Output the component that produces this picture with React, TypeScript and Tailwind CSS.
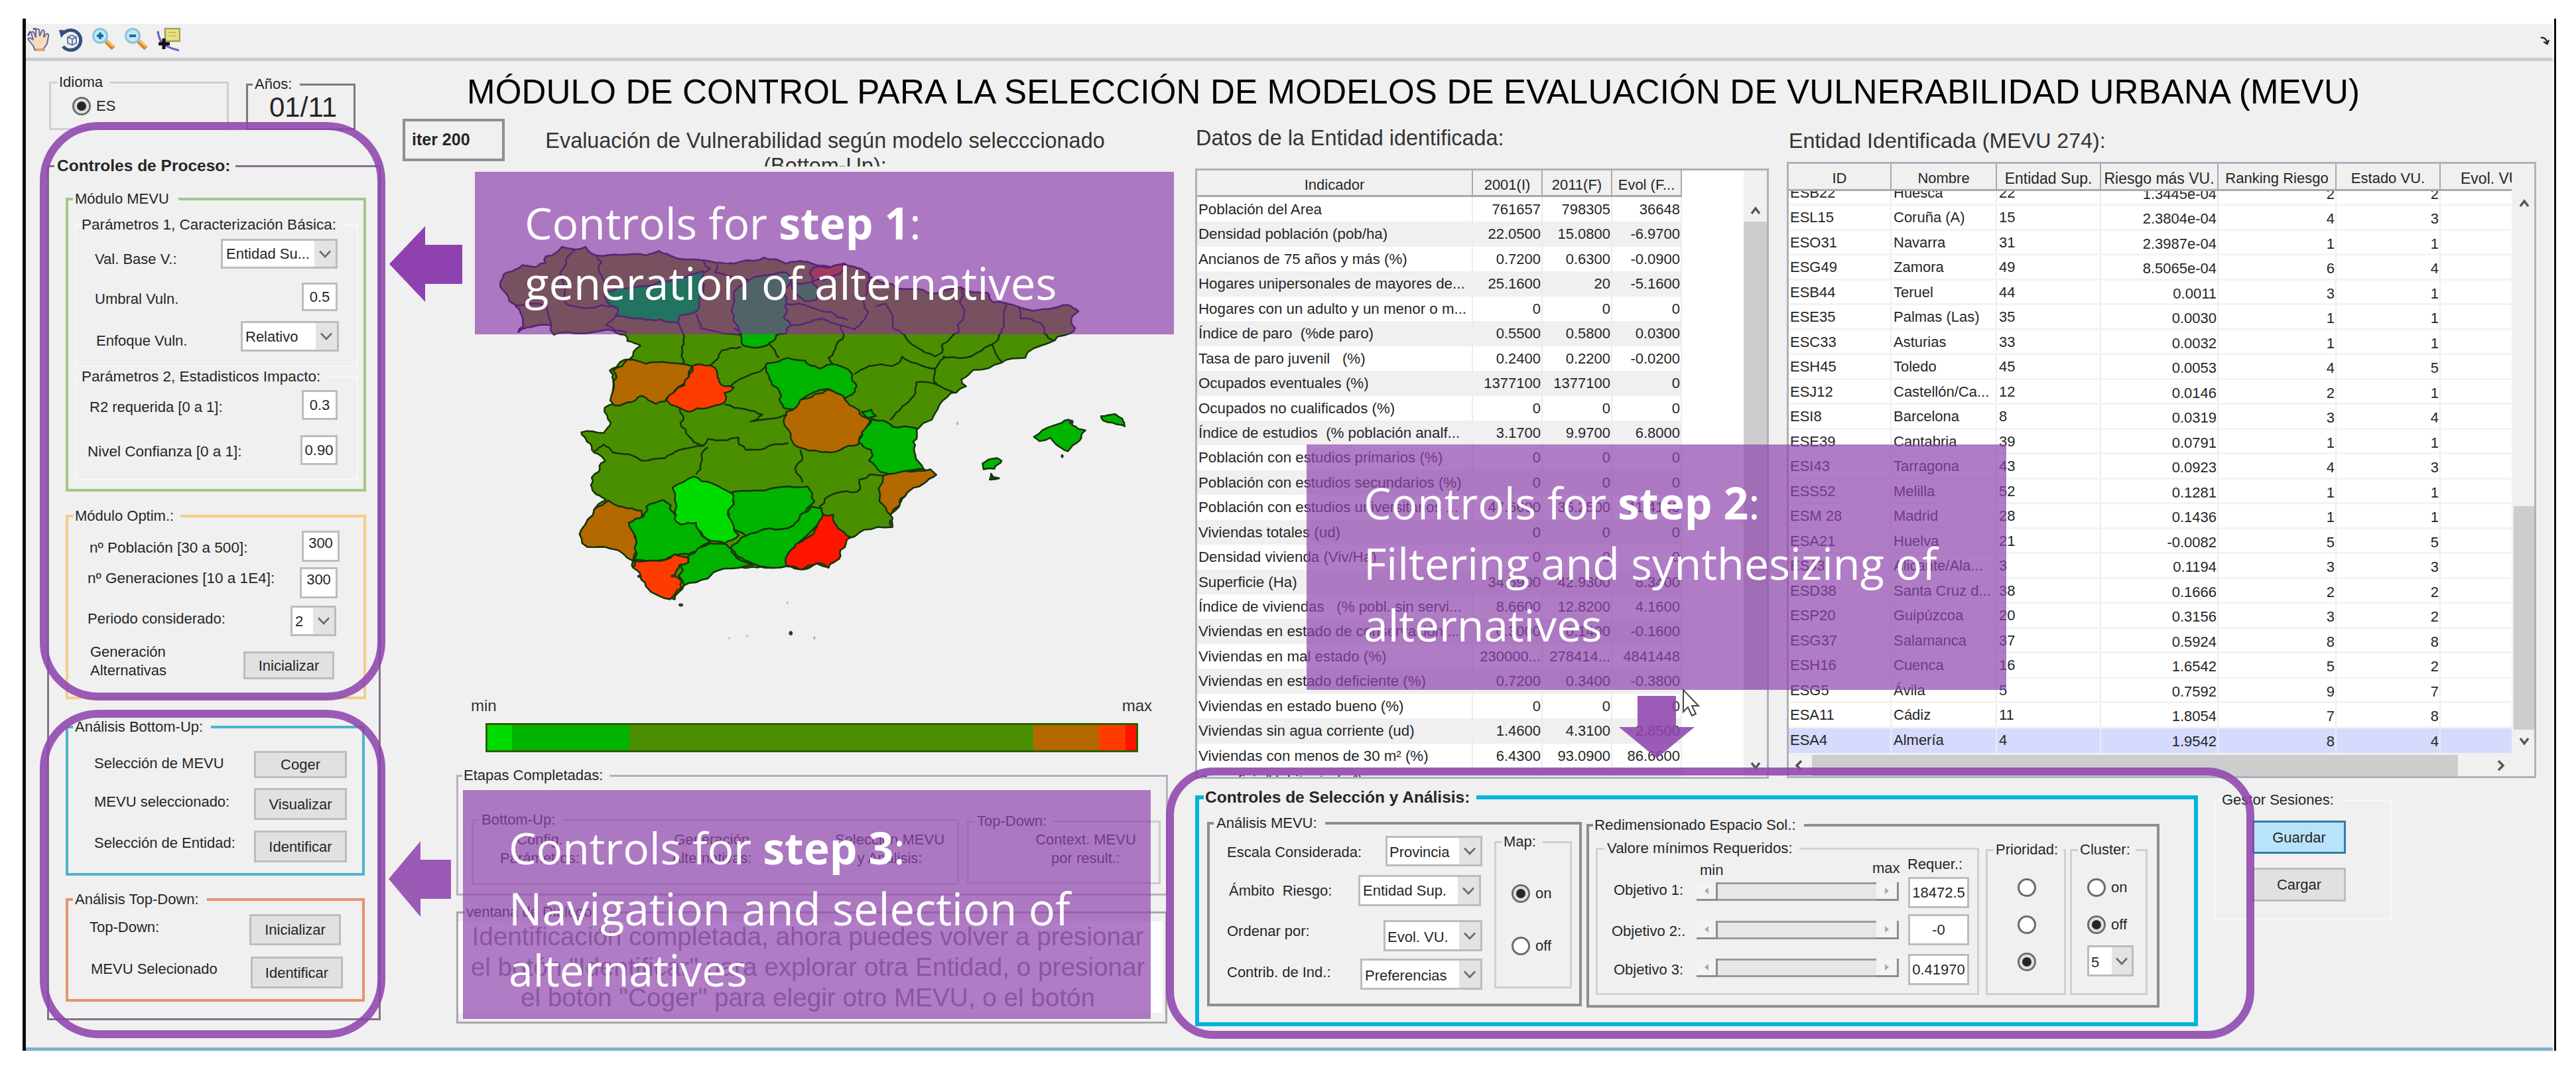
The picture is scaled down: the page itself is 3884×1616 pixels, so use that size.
import type { ReactNode } from "react";
import clsx from "clsx";

// ─── Data ─────────────────────────────────────────────────────────────────────

const indicators: [string, string, string, string][] = [
  ["Población del Area", "761657", "798305", "36648"],
  ["Densidad población (pob/ha)", "22.0500", "15.0800", "-6.9700"],
  ["Ancianos de 75 años y más (%)", "0.7200", "0.6300", "-0.0900"],
  ["Hogares unipersonales de mayores de...", "25.1600", "20", "-5.1600"],
  ["Hogares con un adulto y un menor o m...", "0", "0", "0"],
  ["Índice de paro  (%de paro)", "0.5500", "0.5800", "0.0300"],
  ["Tasa de paro juvenil   (%)", "0.2400", "0.2200", "-0.0200"],
  ["Ocupados eventuales (%)", "1377100", "1377100", "0"],
  ["Ocupados no cualificados (%)", "0", "0", "0"],
  ["Índice de estudios  (% población analf...", "3.1700", "9.9700", "6.8000"],
  ["Población con estudios primarios (%)", "0", "0", "0"],
  ["Población con estudios secundarios (%)", "0", "0", "0"],
  ["Población con estudios universitarios ...", "47.6600", "36.2500", "-11.4100"],
  ["Viviendas totales (ud)", "0", "0", "0"],
  ["Densidad vivienda (Viv/Ha)", "0", "0", "0"],
  ["Superficie (Ha)", "34.5900", "42.9300", "8.3400"],
  ["Índice de viviendas   (% pobl. sin servi...", "8.6600", "12.8200", "4.1600"],
  ["Viviendas en estado de conservación ...", "0.3000", "0.1400", "-0.1600"],
  ["Viviendas en mal estado (%)", "230000...", "278414...", "4841448"],
  ["Viviendas en estado deficiente (%)", "0.7200", "0.3400", "-0.3800"],
  ["Viviendas en estado bueno (%)", "0", "0", "0"],
  ["Viviendas sin agua corriente (ud)", "1.4600", "4.3100", "2.8500"],
  ["Viviendas con menos de 30 m² (%)", "6.4300", "93.0900", "86.6600"],
  ["Superficie/Habitante (m²)", "", "", ""],
];

const entities: [string, string, string, string, string, string][] = [
  ["ESB22", "Huesca", "22", "1.3445e-04", "2", "2"],
  ["ESL15", "Coruña (A)", "15", "2.3804e-04", "4", "3"],
  ["ESO31", "Navarra", "31", "2.3987e-04", "1", "1"],
  ["ESG49", "Zamora", "49", "8.5065e-04", "6", "4"],
  ["ESB44", "Teruel", "44", "0.0011", "3", "1"],
  ["ESE35", "Palmas (Las)", "35", "0.0030", "1", "1"],
  ["ESC33", "Asturias", "33", "0.0032", "1", "1"],
  ["ESH45", "Toledo", "45", "0.0053", "4", "5"],
  ["ESJ12", "Castellón/Ca...", "12", "0.0146", "2", "1"],
  ["ESI8", "Barcelona", "8", "0.0319", "3", "4"],
  ["ESE39", "Cantabria", "39", "0.0791", "1", "1"],
  ["ESI43", "Tarragona", "43", "0.0923", "4", "3"],
  ["ESS52", "Melilla", "52", "0.1281", "1", "1"],
  ["ESM 28", "Madrid", "28", "0.1436", "1", "1"],
  ["ESA21", "Huelva", "21", "-0.0082", "5", "5"],
  ["ESJ3", "Alicante/Ala...", "3", "0.1194", "3", "3"],
  ["ESD38", "Santa Cruz d...", "38", "0.1666", "2", "2"],
  ["ESP20", "Guipúzcoa", "20", "0.3156", "3", "2"],
  ["ESG37", "Salamanca", "37", "0.5924", "8", "8"],
  ["ESH16", "Cuenca", "16", "1.6542", "5", "2"],
  ["ESG5", "Ávila", "5", "0.7592", "9", "7"],
  ["ESA11", "Cádiz", "11", "1.8054", "7", "8"],
  ["ESA4", "Almería", "4", "1.9542", "8", "4"],
];

// ─── Map ──────────────────────────────────────────────────────────────────────

const coast =
  "132,160 145,125 178,98 205,105 228,90 228,65 262,30 290,40 312,30 335,62 385,60 440,62 467,45 490,62 560,80 610,92 640,85 688,70 735,92 765,82 795,95 830,105 858,92 895,112 910,140 935,160 975,185 1010,185 1060,200 1105,180 1160,200 1172,235 1215,245 1245,262 1290,260 1330,245 1352,268 1338,290 1345,330 1335,350 1290,385 1240,440 1190,458 1130,485 1105,520 1115,545 1095,568 1083,570 1055,630 1015,700 1003,750 1008,800 1025,850 1052,872 1025,905 990,940 975,980 955,1020 960,1065 900,1075 870,1105 850,1150 840,1190 825,1215 800,1200 770,1222 735,1210 700,1215 665,1212 605,1218 570,1255 520,1280 500,1332 460,1305 430,1260 410,1210 412,1180 365,1145 315,1138 303,1075 330,1000 355,965 335,945 323,910 340,860 353,822 330,790 315,750 303,715 350,718 365,680 352,625 370,610 370,520 363,487 385,455 405,445 428,395 400,378 395,355 360,335 290,350 245,355 240,320 210,320 170,345 180,300 165,250 150,220";

const borders = [
  "290,40 265,110 262,150 270,240 290,250 330,255 345,245 375,250",
  "335,62 345,90 340,120 355,170 355,200",
  "165,245 200,240 230,250 240,320",
  "375,285 355,320 400,345",
  "560,80 575,110 562,125",
  "590,95 585,125 620,140 655,150",
  "510,310 518,350 515,400 518,468",
  "545,280 555,330 600,350 640,355 625,330",
  "575,468 600,412 640,400",
  "695,460 650,510 610,560",
  "700,390 720,440",
  "745,320 780,310 810,295 850,320 855,370 835,420 825,440 835,465",
  "730,240 790,255 830,270 865,300",
  "910,140 905,200 900,240 900,300 880,335 850,320",
  "925,250 945,240 960,330 985,355 1010,400 1050,435 1065,420 1065,390 1100,345 1110,290 1105,180",
  "1200,240 1195,300 1190,345 1170,390 1190,455",
  "1065,435 1110,440 1140,420 1170,390",
  "1225,250 1230,295 1270,310 1280,350 1300,375",
  "880,500 910,470 960,470 980,435 1010,460 1050,480 1070,440",
  "1050,480 1055,540 1090,570",
  "1055,540 1010,530 1005,580 980,620 955,670",
  "510,630 512,680 530,730 560,765 510,780 480,810 430,820 370,790 350,760 330,785",
  "605,612 650,630 685,650 660,675 735,650",
  "560,765 570,740 610,745 635,735 650,780 690,775 740,755",
  "570,770 555,830 545,870",
  "765,780 760,830 770,900",
  "805,990 840,940 885,935 890,890 915,870 940,875",
];

type Province = { name: string; fill: string; tint: string; points: string };

const provinces: Province[] = [
  { name: "leon", fill: "#00b400", tint: "#22735f", points: "350,200 380,180 440,175 500,150 560,120 562,170 553,215 550,260 510,285 505,312 470,298 430,295 375,285 380,260 355,230" },
  { name: "burgos", fill: "#00b400", tint: "#506468", points: "625,215 655,155 690,135 735,125 745,160 730,200 735,240 730,290 745,320 735,350 715,355 700,385 668,403 645,395 640,350 632,320 620,270" },
  { name: "guipuzcoa", fill: "#ff3c00", tint: "#a03a60", points: "795,105 830,105 858,92 848,130 820,150 790,158" },
  { name: "alava", fill: "#00b400", tint: "#506468", points: "745,165 790,160 808,190 800,225 775,230 755,200" },
  { name: "salamanca", fill: "#b36800", tint: "#b36800", points: "370,487 400,447 440,462 475,455 535,470 530,510 500,560 480,600 460,610 430,580 400,605 372,615 372,540" },
  { name: "avila", fill: "#ff3c00", tint: "#ff3c00", points: "537,470 575,468 590,510 605,545 625,550 605,570 605,605 570,625 530,640 510,625 482,595 500,565 530,510" },
  { name: "guadalajara", fill: "#00b400", tint: "#00b400", points: "695,460 740,440 775,450 805,480 840,465 870,490 882,535 875,575 860,590 825,555 770,590 750,630 730,625 725,580 705,540 697,500" },
  { name: "cuenca", fill: "#b36800", tint: "#b36800", points: "735,640 765,595 795,575 825,557 850,575 865,605 890,635 912,670 905,710 888,760 850,780 810,788 760,770 745,720 732,660" },
  { name: "rincon", fill: "#00b400", tint: "#00b400", points: "895,640 915,632 925,655 905,662" },
  { name: "valencia", fill: "#00b400", tint: "#00b400", points: "915,665 940,672 960,695 1010,700 1003,750 1008,800 1025,850 985,858 965,875 935,862 910,820 915,780 888,750 895,715" },
  { name: "alicante", fill: "#b36800", tint: "#b36800", points: "940,875 985,858 1040,852 1052,872 1025,905 990,940 975,985 955,1020 932,970" },
  { name: "huelva", fill: "#b36800", tint: "#b36800", points: "360,967 390,990 430,1005 430,1030 403,1050 415,1100 412,1190 365,1145 315,1138 303,1075 330,1000" },
  { name: "sevilla", fill: "#00b400", tint: "#00b400", points: "403,1050 435,1025 440,990 475,965 492,985 500,1020 520,1050 545,1050 555,1090 575,1120 545,1155 530,1165 500,1170 480,1185 440,1190 415,1185 417,1100" },
  { name: "jaen", fill: "#00b400", tint: "#00b400", points: "622,935 690,930 740,915 780,915 795,970 765,1020 750,1060 700,1070 650,1098 620,1060 615,1020 625,980" },
  { name: "granada", fill: "#00b400", tint: "#00b400", points: "640,1105 650,1098 700,1070 750,1060 765,1020 790,990 810,995 805,1050 770,1110 740,1160 735,1210 700,1215 665,1200 635,1175 618,1140" },
  { name: "malaga", fill: "#00b400", tint: "#00b400", points: "530,1170 575,1125 610,1130 625,1165 665,1205 605,1218 570,1255 520,1280 508,1245 515,1200" },
  { name: "cordoba", fill: "#00dc00", tint: "#00dc00", points: "495,920 540,878 580,905 620,940 625,980 615,1030 635,1095 605,1125 575,1115 550,1075 545,1050 512,1055 500,1010" },
  { name: "cadiz", fill: "#ff3c00", tint: "#ff3c00", points: "415,1190 445,1190 490,1180 500,1165 530,1180 530,1195 510,1205 500,1245 515,1265 515,1290 490,1332 450,1305 430,1260 412,1215" },
  { name: "almeria", fill: "#ff1400", tint: "#ff1400", points: "812,1020 835,1020 845,1070 870,1102 850,1150 840,1190 825,1215 800,1198 770,1222 735,1208 745,1150 775,1110 800,1065" },
  { name: "mallorca", fill: "#00b400", tint: "#00b400", points: "1258,732 1300,690 1332,668 1340,690 1367,708 1355,745 1330,785 1305,760 1293,735 1270,748" },
  { name: "menorca", fill: "#00b400", tint: "#00b400", points: "1400,655 1430,648 1445,665 1450,693 1425,680 1405,672" },
  { name: "ibiza", fill: "#00b400", tint: "#00b400", points: "1150,830 1180,810 1190,820 1175,850 1152,852" },
  { name: "formentera", fill: "#1c4a1c", tint: "#1c4a1c", points: "1168,868 1172,880 1185,885 1165,890" },
];

type Point = [number, number];

// Adds small bumps between two points. The bump depends only on the two ends,
// so neighbouring provinces share the same border.
const roughen = (a: Point, b: Point, depth: number): Point[] => {
  const dx = b[0] - a[0];
  const dy = b[1] - a[1];
  const len = Math.hypot(dx, dy);
  if (depth === 0 || len < 14) return [b];
  const seed = Math.sin((a[0] + b[0]) * 12.9898 + (a[1] + b[1]) * 78.233) * 43758.5453;
  const r = (seed - Math.floor(seed) - 0.5) * 0.3;
  const sign = a[0] < b[0] || (a[0] === b[0] && a[1] < b[1]) ? 1 : -1;
  const mid: Point = [(a[0] + b[0]) / 2 - dy * r * sign, (a[1] + b[1]) / 2 + dx * r * sign];
  return [...roughen(a, mid, depth - 1), ...roughen(mid, b, depth - 1)];
};

const toPath = (points: string, closed = true) => {
  const list = points.split(" ").map((p) => p.split(",").map(Number) as Point);
  const ends = closed ? [...list.slice(1), list[0]] : list.slice(1);
  let from = list[0];
  const out: Point[] = [from];
  for (const to of ends) {
    out.push(...roughen(from, to, 2));
    from = to;
  }
  return "M" + out.map(([x, y]) => `${x.toFixed(1)},${y.toFixed(1)}`).join("L") + (closed ? "Z" : "");
};

const SpainMap = ({ tinted = false, className }: { tinted?: boolean; className?: string }) => {
  const stroke = tinted ? "#5b2378" : "#16330a";
  return (
    <svg viewBox="130 20 1330 1480" preserveAspectRatio="none" className={className}>
      <g stroke={stroke} strokeWidth={2.5} strokeLinejoin="round">
        <path d={toPath(coast)} fill={tinted ? "#77515f" : "#4a8f00"} vectorEffect="non-scaling-stroke" />
        {borders.map((b) => (
          <path key={b} d={toPath(b, false)} fill="none" vectorEffect="non-scaling-stroke" />
        ))}
        {provinces.map((p) => (
          <path key={p.name} d={toPath(p.points)} fill={tinted ? p.tint : p.fill} vectorEffect="non-scaling-stroke" />
        ))}
      </g>
      <g fill="#333">
        <ellipse cx={513} cy={1353} rx={5} ry={6} />
        <ellipse cx={745} cy={1457} rx={4} ry={8} />
        <ellipse cx={1318} cy={803} rx={3} ry={7} />
        <ellipse cx={1337} cy={677} rx={5} ry={9} />
        <ellipse cx={955} cy={1050} rx={3} ry={14} />
        <ellipse cx={426} cy={1247} rx={5} ry={6} />
        <ellipse cx={496} cy={1246} rx={5} ry={6} />
      </g>
      <g fill="#aaa">
        <ellipse cx={1097} cy={682} rx={2} ry={7} />
        <ellipse cx={795} cy={1475} rx={2} ry={6} />
        <ellipse cx={653} cy={1468} rx={1.5} ry={5} />
        <ellipse cx={615} cy={1476} rx={1.5} ry={4} />
        <ellipse cx={738} cy={1345} rx={1.5} ry={5} />
      </g>
    </svg>
  );
};

// ─── Small widgets ────────────────────────────────────────────────────────────

const Group = ({
  title,
  className,
  legendClass,
  children,
}: {
  title: string;
  className: string;
  legendClass?: string;
  children?: ReactNode;
}) => (
  <fieldset className={className}>
    <legend className={clsx("leading-7 whitespace-pre", legendClass)}>{title}</legend>
    {children}
  </fieldset>
);

const Row = ({ className, children }: { className: string; children: ReactNode }) => (
  <div className={clsx("flex items-start justify-between", className)}>{children}</div>
);

const Label = ({ className, children }: { className?: string; children: ReactNode }) => (
  <span className={clsx("leading-7 whitespace-pre", className)}>{children}</span>
);

const Input = ({ className, children }: { className: string; children: ReactNode }) => (
  <div className={clsx("flex items-center justify-center border-[3px] border-[#b9bdc3] bg-white whitespace-nowrap", className)}>
    {children}
  </div>
);

const Select = ({
  value,
  className,
  valueClass,
  narrow = false,
}: {
  value: string;
  className: string;
  valueClass?: string;
  narrow?: boolean;
}) => (
  <div className={clsx("flex border-[3px] border-[#bcbcbc] bg-white", className)}>
    <div className={clsx("flex flex-1 items-center whitespace-nowrap", valueClass ?? "pl-[5px]")}>{value}</div>
    <div className={clsx("flex shrink-0 items-center justify-center bg-[#e3e3e3]", narrow ? "w-[30px]" : "w-[32px]")}>
      <svg viewBox="0 0 18 12" className="h-3 w-[18px]" fill="none" stroke="#6a6a6a" strokeWidth={2.6}>
        <path d="M1 1.5L9 10L17 1.5" />
      </svg>
    </div>
  </div>
);

const Button = ({ className, children }: { className: string; children: ReactNode }) => (
  <button className={clsx("flex items-center justify-center border-[3px]", className)}>{children}</button>
);

const grey = "border-[#bdbdbd] bg-[#e1e1e1]";

const Radio = ({ checked = false, className }: { checked?: boolean; className?: string }) => (
  <span
    className={clsx(
      "flex size-7 shrink-0 items-center justify-center rounded-full border-[3px] border-[#6b6b6b] bg-white",
      className,
    )}
  >
    {checked && <span className="size-[14px] rounded-full bg-[#262626] ring-4 ring-[#dedede]" />}
  </span>
);

const Chevron = ({ d, className }: { d: string; className?: string }) => (
  <svg viewBox="0 0 18 18" className={clsx("size-[18px]", className)} fill="none" stroke="#555" strokeWidth={3.4}>
    <path d={d} />
  </svg>
);

const up = "M3 13L9 5L15 13";
const down = "M3 5L9 13L15 5";
const left = "M12 2L5 9L12 16";
const right = "M6 2L13 9L6 16";

const Slider = ({ className }: { className?: string }) => (
  <div className={clsx("flex h-7 w-[305px] shrink-0", className)}>
    <div className="flex w-8 items-center justify-center border-r-[3px] border-b-[3px] border-[#8d8d8d] bg-[#f3f3f3]">
      <svg viewBox="0 0 6 10" className="h-[10px] w-[6px]" fill="#a9a9a9">
        <path d="M6 0V10L0 5Z" />
      </svg>
    </div>
    <div className="flex-1 border-y-[3px] border-[#9a9a9a] bg-[#e7e7e7]" />
    <div className="flex w-[34px] items-center justify-center border-r-[3px] border-b-[3px] border-[#8d8d8d] bg-[#f3f3f3]">
      <svg viewBox="0 0 6 10" className="h-[10px] w-[6px]" fill="#a9a9a9">
        <path d="M0 0V10L6 5Z" />
      </svg>
    </div>
  </div>
);

// ─── Toolbar ──────────────────────────────────────────────────────────────────

const Toolbar = () => (
  <div className="flex h-14 items-start justify-between border-b-[5px] border-[#cdcdcd] pt-[6px] pr-1 pl-[2px]">
    <div className="flex gap-[13px]">
      {/* Pan hand */}
      <svg viewBox="0 0 35 36" className="h-9 w-[35px]">
        <path
          d="M12 34L9 27L1 17Q2 14 6 16L9 18L6 8Q8 4 10 7L13 14L13 3Q16 0 18 3L19 12L22 4Q25 2 26 6L25 14L29 9Q33 8 32 13L30 24L25 31V34Z"
          fill="#fbd9bd"
          stroke="#5d6f9c"
          strokeWidth={2}
          strokeLinejoin="round"
        />
        <path d="M1 12L5 5M9 2L13 1" stroke="#3a4f8c" strokeWidth={2.5} />
        <path d="M12 33H25" stroke="#e2a36f" strokeWidth={4} />
      </svg>
      {/* Rotate */}
      <svg viewBox="0 0 36 36" className="h-9 w-9" fill="none">
        <path d="M7 8A15 15 0 1 1 6 28" stroke="#34507f" strokeWidth={5} />
        <path d="M0 3L13 4L3 15Z" fill="#34507f" />
        <path d="M13 14L19 11L26 14V23L20 26L13 23ZM13 14L20 17L26 14M20 17V26" stroke="#5f7eae" strokeWidth={2} />
      </svg>
      {/* Zoom in / out */}
      {["in", "out"].map((kind) => (
        <svg key={kind} viewBox="0 0 36 36" className="h-9 w-9" fill="none">
          <path d="M22 20L33 31" stroke="#d98a2b" strokeWidth={7} />
          <path d="M23 19L33 28" stroke="#f6c37e" strokeWidth={2.5} />
          <circle cx={13} cy={12} r={10.5} fill="#bfe8fa" stroke="#8fc3dd" strokeWidth={3} />
          <path d="M8 12H18" stroke="#1d6f9a" strokeWidth={4} />
          {kind === "in" && <path d="M13 7V17" stroke="#1d6f9a" strokeWidth={4} />}
        </svg>
      ))}
      {/* Data cursor */}
      <svg viewBox="0 0 36 36" className="h-9 w-9" fill="none">
        <path d="M2 5Q4 22 14 27T34 34" stroke="#6a5fc4" strokeWidth={3} />
        <rect x={13} y={1} width={22} height={19} fill="#e9e08a" stroke="#a8a05a" strokeWidth={2.5} />
        <path d="M18 7H30M18 12H30" stroke="#c9bf66" strokeWidth={2} />
        <path d="M11 16V32M3 24H20" stroke="#111" strokeWidth={5} />
      </svg>
    </div>
    <svg viewBox="0 0 18 18" className="mt-3 h-4 w-4" fill="none" stroke="#222" strokeWidth={2.5}>
      <path d="M2 3Q11 2 13 12M7 10L13 14L16 7" />
    </svg>
  </div>
);

// ─── Left column ──────────────────────────────────────────────────────────────

const ProcessControls = () => (
  <Group
    title="Controles de Proceso:"
    className="mt-[40px] ml-8 h-[1302px] w-[503px] border-[3px] border-[#86708c]"
    legendClass="ml-2 pr-2 pl-1 text-[24.5px] font-bold"
  >
    <Group
      title="Módulo MEVU"
      className="mt-[22px] ml-[25px] h-[455px] w-[453px] border-4 border-[#a3c78a]"
      legendClass="ml-[7px] pr-[14px] pl-[3px]"
    >
      <Group
        title="Parámetros 1, Caracterización Básica:"
        className="mt-[11px] ml-[10px] h-[228px] w-[427px] border-2 border-[#f8f8f8]"
        legendClass="ml-2 pr-2 text-[22.5px]"
      >
        <Row className="h-[52px] pr-[29px] pl-7">
          <Label className="mt-[24px]">Val. Base V.:</Label>
          <Select value="Entidad Su..." className="mt-[7px] h-[45px] w-[176px]" />
        </Row>
        <Row className="mt-[21px] h-[43px] pr-[29px] pl-7">
          <Label className="mt-[11px]">Umbral Vuln.</Label>
          <Input className="h-[43px] w-[54px]">0.5</Input>
        </Row>
        <Row className="mt-[15px] h-[46px] pr-[27px] pl-[30px]">
          <Label className="mt-[16px]">Enfoque Vuln.</Label>
          <Select value="Relativo" className="h-[46px] w-[148px]" valueClass="pl-1" />
        </Row>
      </Group>
      <Group
        title="Parámetros 2, Estadisticos Impacto:"
        className="mt-px ml-[10px] h-[170px] w-[427px] border-2 border-[#f8f8f8]"
        legendClass="ml-2 pr-2 text-[22.5px]"
      >
        <Row className="mt-[6px] h-[45px] pr-[29px] pl-5">
          <Label className="mt-[12px]">R2 requerida [0 a 1]:</Label>
          <Input className="h-[45px] w-[54px]">0.3</Input>
        </Row>
        <Row className="mt-[23px] h-[45px] pr-[29px] pl-[17px]">
          <Label className="mt-[11px] text-[22.5px]">Nivel Confianza [0 a 1]:</Label>
          <Input className="h-[45px] w-[56px]">0.90</Input>
        </Row>
      </Group>
    </Group>

    <Group
      title="Módulo Optim.:"
      className="mt-[23px] ml-[25px] h-[290px] w-[453px] border-4 border-[#f5cd85]"
      legendClass="ml-[7px] pr-[10px] pl-[3px]"
    >
      <Row className="mt-2 h-[47px] pr-9 pl-8">
        <Label className="mt-3 text-[22.5px]">nº Población [30 a 500]:</Label>
        <Input className="h-[47px] w-[57px] border-[#9a9ea4] pb-[10px]">300</Input>
      </Row>
      <Row className="mt-2 h-[47px] pr-[39px] pl-[29px]">
        <Label className="mt-[3px] text-[22.5px]">nº Generaciones [10 a 1E4]:</Label>
        <Input className="h-[47px] w-[57px] border-[#9a9ea4] pb-[10px]">300</Input>
      </Row>
      <Row className="mt-[11px] h-[46px] pr-[41px] pl-[29px]">
        <Label className="mt-[6px]">Periodo considerado:</Label>
        <Select value="2" className="h-[46px] w-[69px]" valueClass="pl-1" />
      </Row>
      <Row className="mt-[10px] h-[58px] pr-[44px] pl-[33px]">
        <div className="flex flex-col">
          <Label>Generación</Label>
          <Label>Alternativas</Label>
        </div>
        <Button className={clsx("mt-[13px] h-[42px] w-[137px]", grey)}>Inicializar</Button>
      </Row>
    </Group>

    <Group
      title="Análisis Bottom-Up:"
      className="mt-[28px] ml-[25px] h-[238px] w-[451px] border-4 border-[#4fb3cf]"
      legendClass="ml-[7px] pr-[12px] pl-[3px]"
    >
      <Row className="mt-[22px] h-[41px] pr-[23px] pl-[39px]">
        <Label className="mt-[5px]">Selección de MEVU</Label>
        <Button className={clsx("h-[41px] w-[140px]", grey)}>Coger</Button>
      </Row>
      <Row className="mt-[15px] h-12 pr-[23px] pl-[39px]">
        <Label className="mt-[7px]">MEVU seleccionado:</Label>
        <Button className={clsx("h-12 w-[140px]", grey)}>Visualizar</Button>
      </Row>
      <Row className="mt-4 h-12 pr-[23px] pl-[39px]">
        <Label className="mt-[5px]">Selección de Entidad:</Label>
        <Button className={clsx("h-12 w-[140px]", grey)}>Identificar</Button>
      </Row>
    </Group>

    <Group
      title="Análisis Top-Down:"
      className="mt-[22px] ml-[25px] h-[168px] w-[451px] border-4 border-[#e5946f]"
      legendClass="ml-[7px] pr-[12px] pl-[3px]"
    >
      <Row className="mt-2 h-[47px] pr-8 pl-8">
        <Label className="mt-[6px]">Top-Down:</Label>
        <Button className={clsx("h-[47px] w-[138px]", grey)}>Inicializar</Button>
      </Row>
      <Row className="mt-[17px] h-12 pr-[29px] pl-[34px]">
        <Label className="mt-[5px]">MEVU Selecionado</Label>
        <Button className={clsx("h-12 w-[139px]", grey)}>Identificar</Button>
      </Row>
    </Group>
  </Group>
);

const LeftColumn = () => (
  <div className="w-[561px] shrink-0">
    <div className="flex h-[104px] items-start pl-[35px]">
      <Group title="Idioma" className="mt-[18px] h-[86px] w-[271px] border-[3px] border-[#cfcfcf]" legendClass="ml-[9px] pr-[10px] pl-[3px]">
        <div className="flex h-[44px] items-center gap-2 pl-8">
          <Radio checked />
          <Label>ES</Label>
        </div>
      </Group>
      <Group title="Años:" className="mt-[21px] ml-[26px] h-[83px] w-[165px] border-[3px] border-[#7b7b7b]" legendClass="ml-[7px] pr-[12px] pl-[3px]">
        <p className="pl-[32px] text-[42px] leading-[42px]">01/11</p>
      </Group>
    </div>
    <ProcessControls />
  </div>
);

// ─── Map column ───────────────────────────────────────────────────────────────

const MapColumn = () => (
  <div className="w-[1180px] shrink-0">
    <div className="flex h-[81px] items-start">
      <div className="mt-[9px] ml-[7px] flex h-16 w-[154px] items-center border-4 border-[#8f8f8f] pl-[10px] text-[25px] font-bold">
        iter 200
      </div>
      <p className="mt-[23px] ml-[33px] h-[58px] w-[900px] overflow-hidden text-center text-[32.4px] leading-[38px] text-[#333]">
        Evaluación de Vulnerabilidad según modelo selecccionado
        <br />
        (Bottom-Up):
      </p>
    </div>
    <SpainMap className="mt-[117px] ml-[153px] h-[604px] w-[950px]" />
    <div className="mt-[78px] flex h-7 justify-between pr-[43px] pl-[110px] text-[24px] leading-7 text-[#333]">
      <span>min</span>
      <span>max</span>
    </div>
    <div className="mt-3 ml-[132px] flex h-11 w-[984px] border-[3px] border-black/35 bg-[#4a8f00] bg-clip-border">
      <div className="w-[37px] bg-[#00dc00]" />
      <div className="w-[177px] bg-[#00b400]" />
      <div className="flex-1 bg-[#4a8f00]" />
      <div className="w-[99px] bg-[#b36800]" />
      <div className="w-[40px] bg-[#ff3c00]" />
      <div className="w-[16px] bg-[#ff1400]" />
    </div>

    <Group title="Etapas Completadas:" className="mt-[21px] ml-[88px] h-[195px] w-[1073px] border-[3px] border-[#bcaec1]" legendClass="ml-[6px] pr-[10px] pl-[2px]">
      <div className="mt-[39px] flex items-start">
        <Group title="Bottom-Up:" className="ml-5 h-[112px] w-[733px] border-[3px] border-[#cccccc]" legendClass="ml-[9px] pr-[10px] pl-[3px]">
          <div className="flex pt-[2px] text-center leading-7">
            <p className="w-[200px]">Config.<br />Parámetros:</p>
            <p className="w-[318px]">Generación<br />Alternativas:</p>
            <p className="w-[211px] pl-2">Selección MEVU<br />y Análisis:</p>
          </div>
        </Group>
        <Group title="Top-Down:" className="mt-[2px] ml-3 h-[109px] w-[292px] border-[3px] border-[#cccccc]" legendClass="ml-[9px] pr-[10px] pl-[3px]">
          <p className="pl-[66px] text-center leading-7">Context. MEVU<br />por result.:</p>
        </Group>
      </div>
    </Group>

    <Group title="ventana de Diálogo:" className="mt-[11px] ml-[88px] h-[182px] w-[1072px] border-[3px] border-[#a8a8a8]" legendClass="ml-[10px] pr-[10px] pl-[2px]">
      <p className="h-[138px] w-[1062px] bg-white pr-2 text-center text-[38.7px] leading-[46px] whitespace-nowrap text-[#808080]">
        Identificación completada, ahora puedes volver a presionar
        <br />
        el botón "Identificar" para explorar otra Entidad, o presionar
        <br />
        el botón "Coger" para elegir otro MEVU, o el botón
      </p>
    </Group>
  </div>
);

// ─── Tables ───────────────────────────────────────────────────────────────────

const IndicatorTable = () => (
  <div className="mt-[26px] ml-[22px] flex h-[920px] w-[865px] overflow-hidden border-[3px] border-[#abb1bd] bg-white">
    <div className="w-[731px] shrink-0">
      <div className="flex h-10 items-center border-b-[3px] border-[#a9a9a9] bg-[#f0f0f0] text-center">
        <span className="h-full w-[416px] border-r-2 border-[#a9a9a9] pt-1 leading-9">Indicador</span>
        <span className="h-full w-[105px] border-r-2 border-[#a9a9a9] pt-1 leading-9">2001(I)</span>
        <span className="h-full w-[105px] border-r-2 border-[#a9a9a9] pt-1 leading-9">2011(F)</span>
        <span className="h-full w-[105px] border-r-2 border-[#a9a9a9] pt-1 leading-9">Evol (F...</span>
      </div>
      {indicators.map(([name, before, after, diff], i) => (
        <div key={name} className={clsx("flex h-[37.45px] leading-[37px]", i % 2 === 1 && "bg-[#f0f0f0]")}>
          <span className="w-[416px] overflow-hidden border-r-2 border-[#ececec] pl-[2px] text-[22.3px] whitespace-pre">{name}</span>
          <span className="w-[105px] border-r-2 border-[#ececec] pr-px text-right">{before}</span>
          <span className="w-[105px] border-r-2 border-[#ececec] pr-px text-right">{after}</span>
          <span className="w-[105px] border-r-2 border-[#ececec] pr-px text-right">{diff}</span>
        </div>
      ))}
    </div>
    <div className="ml-auto flex w-[35px] flex-col items-center bg-[#f0f0f0] pt-[52px]">
      <Chevron d={up} />
      <div className="mt-[7px] h-[705px] w-full bg-[#cdcdcd]" />
      <Chevron d={down} className="mt-[106px]" />
    </div>
  </div>
);

const EntityTable = () => (
  <div className="mt-3 ml-1 h-[929px] w-[1130px] border-[3px] border-[#abb1bd] bg-[#f0f0f0]">
    <div className="flex">
      <div className="h-[888px] w-[1090px] overflow-hidden bg-white">
        <div className="flex h-[41px] border-b-[3px] border-[#a9a9a9] bg-[#f0f0f0] text-center leading-9 whitespace-nowrap">
          <span className="w-[155px] border-r-2 border-[#a9a9a9] pt-1">ID</span>
          <span className="w-[159px] border-r-2 border-[#a9a9a9] pt-1">Nombre</span>
          <span className="w-[157px] border-r-2 border-[#a9a9a9] pt-1 text-[23px]">Entidad Sup.</span>
          <span className="w-[177px] border-r-2 border-[#a9a9a9] pt-1 text-[23px]">Riesgo más VU.</span>
          <span className="w-[178px] border-r-2 border-[#a9a9a9] pt-1">Ranking Riesgo</span>
          <span className="w-[157px] border-r-2 border-[#a9a9a9] pt-1">Estado VU.</span>
          <span className="w-[107px] overflow-hidden pt-1 pl-[30px] text-left text-[23px]">Evol. VU.</span>
        </div>
        <div className="flex h-[847px] flex-col justify-end overflow-hidden">
          {entities.map(([id, name, sup, risk, rank, state], i) => (
            <div
              key={id}
              className={clsx(
                "flex h-[37.5px] shrink-0 leading-[35px]",
                i === entities.length - 1 ? "bg-[#d6dafd]" : "border-b-[3px] border-[#f3f3f3]",
              )}
            >
              <span className="w-[155px] border-r-2 border-[#ededed] pl-[2px]">{id}</span>
              <span className="w-[159px] border-r-2 border-[#ededed] pl-[3px] whitespace-nowrap">{name}</span>
              <span className="w-[157px] border-r-2 border-[#ededed] pl-[3px]">{sup}</span>
              <span className="w-[177px] border-r-2 border-[#ededed] pt-[2px] pr-px text-right">{risk}</span>
              <span className="w-[178px] border-r-2 border-[#ededed] pt-[2px] pr-px text-right">{rank}</span>
              <span className="w-[157px] border-r-2 border-[#ededed] pt-[2px] pr-px text-right">{state}</span>
            </div>
          ))}
        </div>
      </div>
      <div className="ml-[3px] flex w-[31px] flex-col items-center pt-[51px]">
        <Chevron d={up} />
        <div className="mt-[447px] h-[337px] w-full bg-[#cdcdcd]" />
        <Chevron d={down} className="mt-2" />
      </div>
    </div>
    <div className="mt-[3px] flex h-8 items-center pl-[7px]">
      <Chevron d={left} />
      <div className="ml-[10px] h-full w-[974px] bg-[#cdcdcd]" />
      <Chevron d={right} className="ml-[55px]" />
    </div>
  </div>
);

// ─── Selection and analysis controls ──────────────────────────────────────────

const goals = [
  { label: "Objetivo 1:", value: "18472.5", row: "h-[47px]", labelClass: "mt-[6px] pl-6", slider: "mt-2" },
  { label: "Objetivo 2:.", value: "-0", row: "mt-[9px] h-[47px]", labelClass: "mt-3 pl-[21px]", slider: "mt-[10px]" },
  { label: "Objetivo 3:", value: "0.41970", row: "mt-[13px] h-[47px]", labelClass: "mt-[10px] pl-6", slider: "mt-[7px]" },
];

const SelectionControls = () => (
  <Group
    title="Controles de Selección y Análisis:"
    className="mt-[14px] ml-[22px] h-[359px] w-[1512px] border-[6px] border-[#00b4dc]"
    legendClass="ml-[7px] pr-[10px] pl-[2px] text-[24.5px] font-bold"
  >
    <div className="flex items-start">
      <Group title="Análisis MEVU:" className="mt-[11px] ml-3 h-[290px] w-[565px] border-4 border-[#8e8e8e]" legendClass="ml-[6px] pr-3 pl-1">
        <div className="flex items-start">
          <div className="w-[411px]">
            <Row className="mt-[5px] h-[46px] pl-[26px]">
              <Label className="mt-[11px]">Escala Considerada:</Label>
              <Select value="Provincia" className="h-[46px] w-[146px]" valueClass="pl-[3px] pt-[3px]" />
            </Row>
            <Row className="mt-[13px] h-[47px] pr-[2px] pl-[29px]">
              <Label className="mt-[10px]">Ámbito  Riesgo:</Label>
              <Select value="Entidad Sup." className="h-[47px] w-[185px]" valueClass="pl-1" />
            </Row>
            <Row className="mt-[21px] h-[47px] pl-[26px]">
              <Label className="mt-[3px]">Ordenar por:</Label>
              <Select value="Evol. VU." className="h-[47px] w-[149px]" valueClass="pl-[3px] pt-1" />
            </Row>
            <Row className="mt-[11px] h-12 pl-[26px]">
              <Label className="mt-[7px]">Contrib. de Ind.:</Label>
              <Select value="Preferencias" className="h-[47px] w-[184px]" valueClass="pl-1 pt-1" />
            </Row>
          </div>
          <Group title="Map:" className="ml-[18px] h-[235px] w-[117px] border-[3px] border-[#cfcfcf]" legendClass="ml-[8px] pr-[10px] pl-[3px]">
            <div className="mt-[50px] ml-[23px] flex h-7 items-center gap-2">
              <Radio checked />
              <Label>on</Label>
            </div>
            <div className="mt-[51px] ml-[23px] flex h-7 items-center gap-2">
              <Radio />
              <Label>off</Label>
            </div>
          </Group>
        </div>
      </Group>

      <Group title="Redimensionado Espacio Sol.:" className="mt-[14px] ml-[7px] h-[289px] w-[864px] border-4 border-[#8e8e8e]" legendClass="ml-[6px] pr-3 pl-[2px] text-[22.3px]">
        <div className="flex items-start">
          <Group title="Valore mínimos Requeridos:" className="mt-[7px] ml-[10px] h-[235px] w-[578px] border-[3px] border-[#d2d2d2]" legendClass="ml-[10px] pr-[10px] pl-1 text-[22.3px]">
            <div className="flex h-[29px] items-start pl-[154px] leading-7">
              <span className="mt-[5px] w-[260px]">min</span>
              <span className="mt-[2px] w-[53px]">max</span>
              <span className="-mt-1">Requer.:</span>
            </div>
            {goals.map((g) => (
              <div key={g.label} className={clsx("flex items-start", g.row)}>
                <Label className={clsx("w-[149px]", g.labelClass)}>{g.label}</Label>
                <Slider className={g.slider} />
                <Input className="ml-[14px] h-[47px] w-[92px]">{g.value}</Input>
              </div>
            ))}
          </Group>
          <Group title="Prioridad:" className="mt-[9px] ml-[10px] h-[233px] w-[121px] border-[3px] border-[#cfcfcf]" legendClass="ml-[9px] pr-2 pl-[3px]">
            <div className="flex flex-col items-center gap-7 pt-[29px] pl-[3px]">
              <Radio />
              <Radio />
              <Radio checked />
            </div>
          </Group>
          <Group title="Cluster:" className="mt-[9px] ml-[6px] h-[233px] w-[117px] border-[3px] border-[#cfcfcf]" legendClass="ml-[9px] pr-2 pl-[3px]">
            <div className="mt-[29px] ml-[23px] flex h-7 items-center gap-2">
              <Radio />
              <Label>on</Label>
            </div>
            <div className="mt-7 ml-[23px] flex h-7 items-center gap-2">
              <Radio checked />
              <Label>off</Label>
            </div>
            <Select value="5" narrow className="mt-[17px] ml-[23px] h-[47px] w-[70px]" valueClass="pl-[3px] pt-1" />
          </Group>
        </div>
      </Group>
    </div>
  </Group>
);

const SessionManager = () => (
  <Group title="Gestor Sesiones:" className="mt-[18px] ml-6 h-[196px] w-[268px] border-[3px] border-[#f7f7f7]" legendClass="ml-[9px] pr-[10px]">
    <Button className="mt-[17px] ml-[55px] h-[50px] w-[141px] border-[#2f7ea6] bg-[#b9e3fb]">Guardar</Button>
    <Button className={clsx("mt-[21px] ml-[55px] h-[51px] w-[141px]", grey)}>Cargar</Button>
  </Group>
);

// ─── Annotations laid over the window ─────────────────────────────────────────

const Annotations = () => (
  <div className="font-['Open_Sans',sans-serif] text-[66px] whitespace-nowrap text-white">
    {/* Outlines round the three groups of controls */}
    <div className="absolute top-[184px] left-[60px] h-[872px] w-[521px] rounded-[88px] border-[12px] border-[#8e44ad]/87" />
    <div className="absolute top-[1070px] left-[60px] h-[495px] w-[521px] rounded-[88px] border-[12px] border-[#8e44ad]/87" />
    <div className="absolute top-[1157px] left-[1758px] h-[409px] w-[1641px] rounded-[72px] border-[12px] border-[#8e44ad]/87" />

    {/* Step 1 */}
    <div className="absolute top-[259px] left-[716px] h-[245px] w-[1054px] overflow-hidden bg-[#8e44ad]/70 pt-[31px] pl-[75px] leading-[91px]">
      <SpainMap tinted className="absolute top-[109px] left-[37px] h-[604px] w-[950px]" />
      <p className="relative">
        Controls for <b>step 1</b>:
      </p>
      <p className="relative text-[67px]">generation of alternatives</p>
    </div>
    <svg viewBox="0 0 110 114" className="absolute top-[341px] left-[587px] h-[114px] w-[110px]" fill="#8f42af">
      <path d="M0 57L54 0V28H110V87H54V114Z" />
    </svg>

    {/* Step 2 */}
    <div className="absolute top-[670px] left-[1970px] h-[370px] w-[1055px] bg-[#8e44ad]/70 pt-[41px] pl-[86px] leading-[92px]">
      <p>
        Controls for <b>step 2</b>:
      </p>
      <p className="text-[66.6px]">Filtering and synthesizing of</p>
      <p>alternatives</p>
    </div>
    <svg viewBox="0 0 114 94" className="absolute top-[1049px] left-[2441px] h-[94px] w-[114px]" fill="#8e44ad" fillOpacity={0.88}>
      <path d="M28 0H86V47H114L57 94L0 47H28Z" />
    </svg>

    {/* Step 3 */}
    <div className="absolute top-[1191px] left-[698px] h-[345px] w-[1037px] bg-[#8e44ad]/70 pt-[40px] pl-[69px] leading-[92px]">
      <p>
        Controls for <b>step 3</b>:
      </p>
      <p className="text-[67px]">Navigation and selection of</p>
      <p>alternatives</p>
    </div>
    <svg viewBox="0 0 94 114" className="absolute top-[1268px] left-[586px] h-[114px] w-[94px]" fill="#8e44ad" fillOpacity={0.88}>
      <path d="M0 57L48 0V28H94V87H48V114Z" />
    </svg>

    {/* Mouse pointer */}
    <svg viewBox="0 0 26 42" className="absolute top-[1038px] left-[2537px] h-[42px] w-[26px]" fill="#fff" stroke="#444" strokeWidth={2}>
      <path d="M1 2V35L8 28L14 41L20 38L14 26H24Z" />
    </svg>
  </div>
);

// ─── Page ─────────────────────────────────────────────────────────────────────

export default function App() {
  return (
    <div className="relative h-[1616px] w-[3884px] overflow-hidden bg-white pt-7 pl-[34px] font-['Liberation_Sans',Arial,sans-serif] text-[22px] text-[#262626]">
      <div className="flex h-[1556px]">
        <div className="w-[5px] shrink-0 bg-[#0c0c0c]" />
        <div className="mt-2 w-[3810px] shrink-0 border-b-[5px] border-[#7fb2c8] bg-[#f0f0f0]">
          <Toolbar />
          <div className="flex">
            <LeftColumn />
            <div>
              <h1 className="mt-[17px] ml-[104px] h-[61px] text-[51px] leading-[60px] tracking-[0.2px] whitespace-nowrap text-black">
                MÓDULO DE CONTROL PARA LA SELECCIÓN DE MODELOS DE EVALUACIÓN DE VULNERABILIDAD URBANA (MEVU)
              </h1>
              <div className="flex">
                <MapColumn />
                <div>
                  <div className="flex h-[1004px] items-start">
                    <div className="w-[910px]">
                      <h2 className="mt-[18px] ml-[23px] text-[32.4px] leading-10 text-[#333]">Datos de la Entidad identificada:</h2>
                      <IndicatorTable />
                    </div>
                    <div>
                      <h2 className="mt-[22px] ml-[7px] text-[32.2px] leading-10 text-[#333]">Entidad Identificada (MEVU 274):</h2>
                      <EntityTable />
                    </div>
                  </div>
                  <div className="flex items-start">
                    <SelectionControls />
                    <SessionManager />
                  </div>
                </div>
              </div>
            </div>
          </div>
        </div>
        <div className="ml-[2px] w-[3px] shrink-0 bg-[#0c0c0c]" />
      </div>
      <Annotations />
    </div>
  );
}
